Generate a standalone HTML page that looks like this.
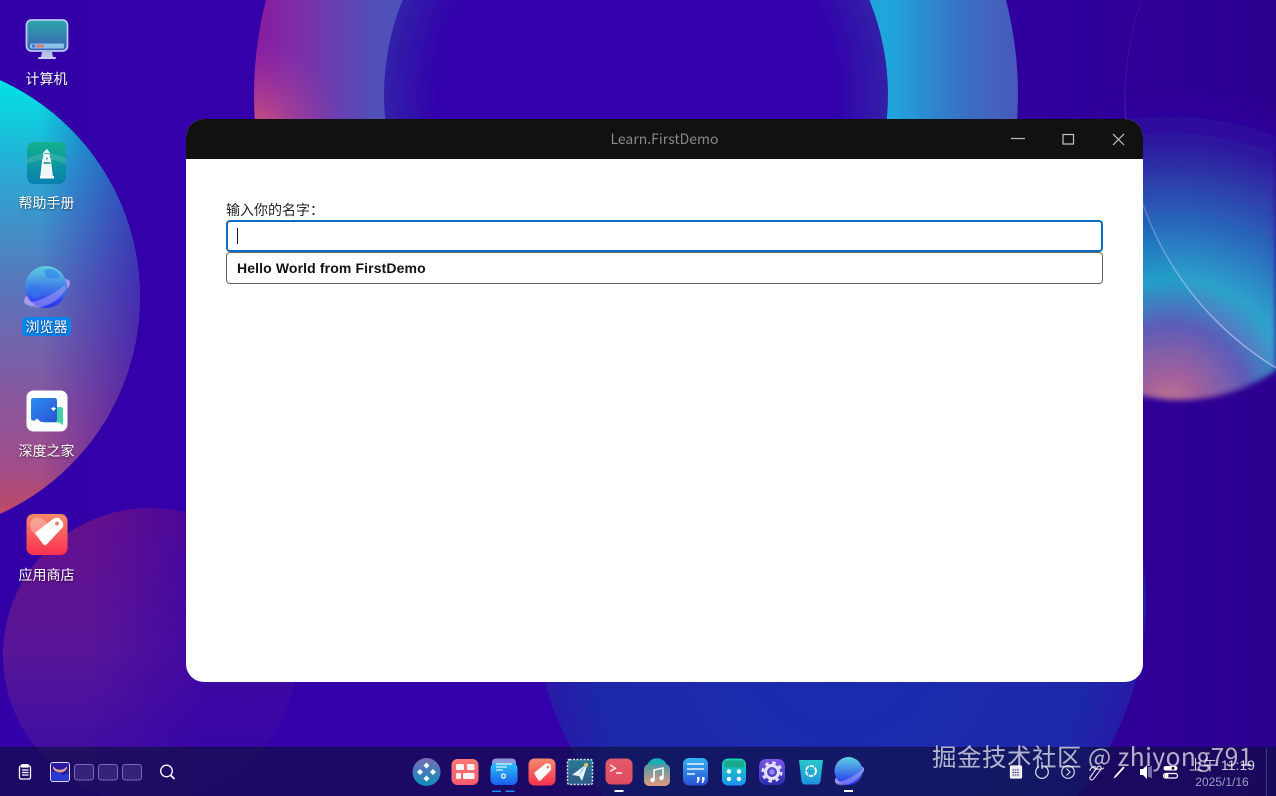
<!DOCTYPE html>
<html lang="zh">
<head>
<meta charset="utf-8">
<title>Learn.FirstDemo</title>
<style>
html,body{margin:0;padding:0;width:1276px;height:796px;overflow:hidden;background:#3000a6;font-family:"Liberation Sans","Noto Sans CJK SC",sans-serif}
svg.abs{position:absolute;left:0;top:0;display:block}
.lbl{position:absolute;left:0;width:93px;text-align:center;color:#fff;font-size:14px;line-height:20px;text-shadow:0 1px 2px rgba(0,0,0,.55)}
.win{position:absolute;left:186px;top:119px;width:957px;height:563px;background:#fff;border-radius:18px;overflow:hidden}
.bar{position:absolute;left:0;top:0;width:100%;height:40px;background:#111}
.title{position:absolute;left:0;top:0;width:957px;text-align:center;line-height:41px;font-size:14px;color:#8a8a8a;font-family:"Noto Sans CJK SC","Liberation Sans",sans-serif}
.name{position:absolute;left:40px;top:81px;font-size:14px;line-height:20px;color:#222;font-family:"Liberation Sans","Noto Sans CJK SC",sans-serif}
.inp{position:absolute;left:40px;top:101px;width:873px;height:28px;border:2px solid #0f6cbd;border-radius:4px;background:#fff}
.caret{position:absolute;left:9px;top:6px;width:1px;height:16px;background:#111}
.btn{position:absolute;left:40px;top:133px;width:875px;height:30px;border:1px solid #666;border-radius:4px;line-height:30px;font-size:14px;font-weight:bold;color:#111;text-indent:10px;letter-spacing:.12px;box-sizing:content-box}
.wm{position:absolute;left:932px;top:739px;font-size:24.5px;line-height:36px;letter-spacing:.5px;color:rgba(255,255,255,.68);white-space:nowrap;font-family:"Noto Sans CJK SC","Liberation Sans",sans-serif}
.time{position:absolute;left:1188px;top:756px;width:68px;text-align:center;font-size:14px;line-height:18px;color:rgba(255,255,255,.8);white-space:nowrap}
.date{position:absolute;left:1186px;top:774px;width:72px;text-align:center;font-size:12px;line-height:16px;color:#9c9fc6}
</style>
</head>
<body>
<svg class="abs" width="1276" height="796" viewBox="0 0 1276 796">
<defs>
<linearGradient id="bg" x1="0" x2="1" y1="0" y2="0"><stop offset="0" stop-color="#3300a8"/><stop offset=".6" stop-color="#3300ad"/><stop offset="1" stop-color="#2c0090"/></linearGradient>
<linearGradient id="lc" x1="0" y1="80" x2="0" y2="515" gradientUnits="userSpaceOnUse"><stop offset="0" stop-color="#00e2e4"/><stop offset=".22" stop-color="#2ba8d4"/><stop offset=".48" stop-color="#5a74bb"/><stop offset=".72" stop-color="#86589f"/><stop offset=".9" stop-color="#a44c88"/><stop offset="1" stop-color="#c04a62"/></linearGradient>
<linearGradient id="lcd" x1="40" y1="0" x2="140" y2="0" gradientUnits="userSpaceOnUse"><stop offset="0" stop-color="#3300a8" stop-opacity="0"/><stop offset="1" stop-color="#3300a8" stop-opacity=".6"/></linearGradient>
<linearGradient id="top" x1="255" x2="1018" y1="0" y2="0" gradientUnits="userSpaceOnUse"><stop offset="0" stop-color="#8a1aa0"/><stop offset=".06" stop-color="#7c30a8"/><stop offset=".16" stop-color="#5050b8"/><stop offset=".5" stop-color="#3f62bb"/><stop offset=".83" stop-color="#1fa6dc"/><stop offset=".93" stop-color="#3a70c4"/><stop offset="1" stop-color="#4858ba"/></linearGradient>
<radialGradient id="topp" cx="250" cy="135" r="95" gradientUnits="userSpaceOnUse"><stop offset="0" stop-color="#dc6070" stop-opacity=".95"/><stop offset=".5" stop-color="#c0508a" stop-opacity=".45"/><stop offset="1" stop-color="#a040a0" stop-opacity="0"/></radialGradient>
<radialGradient id="inner" cx="636" cy="95" r="252" gradientUnits="userSpaceOnUse"><stop offset="0" stop-color="#3200ac"/><stop offset=".78" stop-color="#3200ac"/><stop offset="1" stop-color="#3220a8"/></radialGradient>
<linearGradient id="blc" x1="150" y1="509" x2="150" y2="790" gradientUnits="userSpaceOnUse"><stop offset="0" stop-color="#66108c"/><stop offset=".5" stop-color="#581598"/><stop offset=".85" stop-color="#400ea2"/><stop offset="1" stop-color="#3a0ca4"/></linearGradient>
<linearGradient id="blf" x1="60" y1="0" x2="200" y2="0" gradientUnits="userSpaceOnUse"><stop offset=".2" stop-color="#3300a8" stop-opacity="0"/><stop offset="1" stop-color="#3300a8" stop-opacity=".6"/></linearGradient>
<radialGradient id="brc" cx="840" cy="640" r="306" gradientUnits="userSpaceOnUse"><stop offset="0" stop-color="#1b2cb0"/><stop offset=".8" stop-color="#1c28a8"/><stop offset="1" stop-color="#2a18a8"/></radialGradient>
<radialGradient id="glow" cx="1170" cy="405" r="320" gradientUnits="userSpaceOnUse"><stop offset="0" stop-color="#c07a90"/><stop offset=".09" stop-color="#a4609c"/><stop offset=".25" stop-color="#5d5cb8"/><stop offset=".39" stop-color="#22a0c8"/><stop offset=".56" stop-color="#2266ba"/><stop offset=".74" stop-color="#2c30a4"/><stop offset=".88" stop-color="#2e0ca0" stop-opacity=".8"/><stop offset="1" stop-color="#2c0096" stop-opacity="0"/></radialGradient>
<clipPath id="clipG"><circle cx="1180" cy="230" r="170"/></clipPath>
<filter id="b2" x="-10%" y="-10%" width="120%" height="120%"><feGaussianBlur stdDeviation="3"/></filter>
<linearGradient id="ringS" x1="0" y1="80" x2="0" y2="320" gradientUnits="userSpaceOnUse"><stop offset="0" stop-color="#bec3f5" stop-opacity=".06"/><stop offset=".5" stop-color="#bec3f5" stop-opacity=".3"/><stop offset="1" stop-color="#c8ccf8" stop-opacity=".6"/></linearGradient>
<linearGradient id="ringF" x1="0" y1="140" x2="0" y2="360" gradientUnits="userSpaceOnUse"><stop offset="0" stop-color="#bec8ff" stop-opacity="0"/><stop offset="1" stop-color="#bec8ff" stop-opacity=".1"/></linearGradient>
<linearGradient id="mon" x1="0" y1="0" x2="0" y2="1"><stop offset="0" stop-color="#2aa6a8"/><stop offset="1" stop-color="#3e60b8"/></linearGradient>
<linearGradient id="lh" x1="0" y1="0" x2="0" y2="1"><stop offset="0" stop-color="#12b28e"/><stop offset="1" stop-color="#087fb0"/></linearGradient>
<linearGradient id="globe" x1="0" y1="0" x2="0" y2="1"><stop offset="0" stop-color="#5ed0e0"/><stop offset=".55" stop-color="#3f78e8"/><stop offset="1" stop-color="#2a2cf0"/></linearGradient>
<linearGradient id="tag" x1="0" y1="0" x2="0" y2="1"><stop offset="0" stop-color="#f58a6a"/><stop offset="1" stop-color="#fa3050"/></linearGradient>
<linearGradient id="chat1" x1="0" y1="0" x2="1" y2="1"><stop offset="0" stop-color="#2a90ee"/><stop offset="1" stop-color="#2a50d8"/></linearGradient>
<linearGradient id="files" x1="0" y1="0" x2="0" y2="1"><stop offset="0" stop-color="#2ac0f8"/><stop offset="1" stop-color="#1a60f0"/></linearGradient>
<linearGradient id="term" x1="0" y1="0" x2="0" y2="1"><stop offset="0" stop-color="#e45a68"/><stop offset="1" stop-color="#e04a60"/></linearGradient>
<linearGradient id="mus" x1="0" y1="0" x2="0" y2="1"><stop offset="0" stop-color="#4a98a8"/><stop offset="1" stop-color="#e09a80"/></linearGradient>
<linearGradient id="note" x1="0" y1="0" x2="0" y2="1"><stop offset="0" stop-color="#32b4f0"/><stop offset="1" stop-color="#2a50d8"/></linearGradient>
<linearGradient id="calc" x1="0" y1="0" x2="0" y2="1"><stop offset="0" stop-color="#18d8b0"/><stop offset="1" stop-color="#1a90f0"/></linearGradient>
<linearGradient id="gear" x1="0" y1="0" x2="0" y2="1"><stop offset="0" stop-color="#7a58e8"/><stop offset="1" stop-color="#2a2cb0"/></linearGradient>
<linearGradient id="bin" x1="0" y1="0" x2="0" y2="1"><stop offset="0" stop-color="#28c8c8"/><stop offset="1" stop-color="#2090e0"/></linearGradient>
<linearGradient id="deep" x1="0" y1="0" x2="0" y2="1"><stop offset="0" stop-color="#7a6ab8"/><stop offset="1" stop-color="#0a90b8"/></linearGradient>
<linearGradient id="grid" x1="0" y1="0" x2="0" y2="1"><stop offset="0" stop-color="#fb7a72"/><stop offset="1" stop-color="#f85a70"/></linearGradient>
<linearGradient id="mail" x1="0" y1="0" x2="0" y2="1"><stop offset="0" stop-color="#2a7a90"/><stop offset="1" stop-color="#305a88"/></linearGradient>
</defs>

<!-- wallpaper -->
<rect width="1276" height="796" fill="url(#bg)"/>
<circle cx="636" cy="95" r="382" fill="url(#top)"/>
<circle cx="636" cy="95" r="382" fill="url(#topp)"/>
<circle cx="636" cy="95" r="252" fill="url(#inner)"/>
<circle cx="-98" cy="297" r="238" fill="url(#lc)"/>
<circle cx="-98" cy="297" r="238" fill="url(#lcd)"/>
<path d="M108.400 796A147 147 0 1 1 191.600 796Z" fill="url(#blc)"/>
<path d="M108.400 796A147 147 0 1 1 191.600 796Z" fill="url(#blf)"/>
<path d="M603.400 796A306 306 0 1 1 1076.600 796Z" fill="url(#brc)"/>
<g filter="url(#b2)"><g clip-path="url(#clipG)"><rect x="1000" y="40" width="276" height="380" fill="url(#glow)"/></g></g>
<circle cx="1438" cy="100" r="313" fill="url(#ringF)"/>
<circle cx="1438" cy="100" r="313" fill="none" stroke="url(#ringS)" stroke-width="1.500"/>

<!-- taskbar -->
<rect x="0" y="747" width="1276" height="49" fill="#0e0f3c" fill-opacity=".62"/>
<rect x="0" y="747" width="1276" height="1" fill="#0e0f3c" fill-opacity=".5"/>
<rect x="1266" y="748" width="1" height="48" fill="rgba(255,255,255,.18)"/>

<!-- desktop: computer -->
<g>
<rect x="26.500" y="20" width="41" height="31" rx="5" fill="url(#mon)" stroke="#b8c8f8" stroke-width="1.800"/>
<rect x="30" y="43.500" width="34" height="5" rx="1.500" fill="#8cc0e8"/>
<rect x="32" y="44.500" width="3" height="3" fill="#4a70e0"/><rect x="36" y="44.500" width="8" height="3" fill="#d88078"/>
<path d="M42 52h10l1 5h-12z" fill="#b8c0e8"/><rect x="38" y="57" width="18" height="2" rx="1" fill="#c8d0f0"/>
</g>
<!-- help -->
<g>
<rect x="27" y="142" width="39" height="42" rx="7" fill="url(#lh)"/>
<path d="M27 158l20-6 19 6v6l-19-6-20 6z" fill="rgba(255,255,255,.13)"/>
<path d="M46.800 149l3 3.500v4.500l1 2 2 17h-12.500l2-17 1-2v-4.500z" fill="#f2f8f8"/>
<rect x="44" y="153" width="6" height="1" fill="#58a8a8"/><rect x="43.500" y="162" width="7" height="2" fill="#4aa0b0"/><circle cx="47" cy="158.500" r="1" fill="#4aa0b0"/>
<rect x="40" y="176" width="14" height="2.500" fill="#fff"/>
</g>
<!-- browser -->
<g>
<ellipse cx="47" cy="292" rx="25" ry="9" transform="rotate(-25 47 292)" fill="#a79af0"/>
<circle cx="46" cy="287" r="21" fill="url(#globe)"/>
<path d="M44 270c8-3 14 1 16 6-3 4-10 3-14 1zM30 285c6-3 12 1 14 6-2 6-8 8-12 6-3-4-4-8-2-12z" fill="rgba(50,120,235,.55)"/>
<path d="M25 301c8 3 22-2 40-16 1 2 1 4 0 6-6 8-14 14-24 16-7 1-15 0-16-6z" fill="rgba(170,160,245,.55)"/>
<rect x="22" y="317" width="49" height="19" rx="4" fill="#0a84f0"/>
</g>
<!-- deepin home -->
<g>
<rect x="26.500" y="390.500" width="41" height="41" rx="7" fill="#fbfdff"/>
<path d="M48 407h12c2 0 3 1 3 3v15l-4-2.500H44z" fill="#3fd0a8"/>
<path d="M31 400.500c0-1.500 1-2.500 2.500-2.500h21c1.500 0 2.500 1 2.500 2.500v19c0 1.500-1 2.500-2.500 2.500H41l-4-3.500-3 2.500-3-1.500z" fill="url(#chat1)"/>
<path d="M51 408.500l2.500-1.500 2.500 1.500-2.500 2.500z" fill="#fff"/>
</g>
<!-- store -->
<g>
<rect x="26.500" y="514" width="41" height="41" rx="7" fill="url(#tag)"/>
<path d="M46 547L32 531C27 523 33 516 40 518C43 519 45 521 47 523z" fill="rgba(255,255,255,.3)"/>
<path d="M35 533L53 519Q56 517 59 518L62 521Q64 524 63 527L47 544Q45 546 43 544z" fill="#fff"/>
<circle cx="57" cy="523.500" r="2" fill="#f08070"/>
</g>

<!-- taskbar left -->
<g fill="none" stroke="#fff" stroke-width="1.300">
<rect x="19.500" y="766" width="11" height="13" rx="1.500"/><path d="M22 764.800h6v2.200h-6zM22 770h6.500M22 772.500h6.500M22 775h6.500"/>
<circle cx="166.500" cy="771" r="5.800"/><path d="M171 775.500l3.500 3.500" stroke-width="1.600"/>
</g>
<g>
<rect x="50.500" y="762.500" width="19" height="19" rx="2.500" fill="#2a1aa0" stroke="#dfe0ff"/>
<path d="M53 766c3 5 11 5 14 0v2c-2 6-12 6-14 0z" fill="#e2a090"/>
<path d="M51.500 772l4-1 8 4 5-2v7.500h-17z" fill="#2838d0"/>
<g fill="rgba(190,170,255,.14)" stroke="rgba(175,155,240,.6)">
<rect x="74.500" y="764.500" width="19" height="15.500" rx="2.500"/>
<rect x="98.500" y="764.500" width="19" height="15.500" rx="2.500"/>
<rect x="122.500" y="764.500" width="19" height="15.500" rx="2.500"/>
</g>
</g>

<!-- dock -->
<g>
<circle cx="426.500" cy="772" r="14" fill="url(#deep)"/>
<g fill="#fff"><path d="M426.500 762.500l3 3-3 3-3-3z"/><path d="M426.500 775.500l3 3-3 3-3-3z"/><path d="M420 769l3 3-3 3-3-3z"/><path d="M433 769l3 3-3 3-3-3z"/></g>

<rect x="451.500" y="759" width="27" height="26" rx="6" fill="url(#grid)"/>
<g fill="#fff" opacity=".92"><rect x="456" y="764" width="8" height="6" rx="1"/><rect x="467" y="764" width="7.500" height="6" rx="1"/><rect x="456" y="773" width="5" height="6" rx="1"/><rect x="463" y="773" width="11.500" height="6" rx="1"/></g>

<rect x="492" y="758.500" width="24" height="12" rx="4" fill="#8a9ad8"/>
<rect x="490.500" y="763" width="27" height="22" rx="5" fill="url(#files)"/>
<path d="M496 764h16M496 767h11M496 770h7" stroke="#e4f2ff" stroke-width="1.300"/>
<circle cx="503.500" cy="776" r="2" fill="none" stroke="#fff" stroke-width="1.300"/>
<rect x="492" y="790.500" width="9" height="1.500" fill="#1890f8"/><rect x="505.500" y="790.500" width="9" height="1.500" fill="#1890f8"/>

<rect x="528.500" y="758.500" width="27" height="27" rx="6" fill="url(#tag)"/>
<path d="M534 773l11-9c2-1 6-1 6 3v3l-10 10c-1 1-2 1-3 0z" fill="#fff"/><circle cx="548" cy="767" r="1.400" fill="#f08070"/>

<rect x="567.500" y="759.500" width="25" height="25" rx="2" fill="url(#mail)" stroke="#d0e0f8" stroke-width="1.500" stroke-dasharray="2 1.500"/>
<path d="M572 775l16-12-6 18-3-5z" fill="#e8f4ff"/><path d="M579 776l9-13-7 7z" fill="#9ac8e8"/><circle cx="586" cy="765" r="2" fill="#e8c060"/>

<rect x="605.500" y="758.500" width="27" height="26" rx="6" fill="url(#term)"/>
<path d="M610 765l5.500 3.200-5.500 3.200" fill="none" stroke="#fff" stroke-width="1.300"/><path d="M616 773h6" stroke="#fff" stroke-width="1.300"/>
<rect x="614.500" y="790" width="9" height="2" fill="#f4f4ff"/>

<path d="M647 768c0-13 20-13 20 0z" fill="#14b0b4"/>
<rect x="644" y="764" width="26" height="22" rx="5" fill="url(#mus)"/>
<path d="M654 780v-10l9-2v10" fill="none" stroke="#fff" stroke-width="1.500"/><circle cx="652.500" cy="780" r="2.200" fill="#fff"/><circle cx="661.500" cy="778" r="2.200" fill="#fff"/>

<rect x="683" y="758" width="25" height="27.500" rx="6" fill="url(#note)"/>
<path d="M687 764h17M687 769h17M687 774h8" stroke="#e8f4ff" stroke-width="1.400"/>
<path d="M697 777h2.500v3l-1.500 3h-1.500l1-3h-.5zM702 777h2.500v3l-1.500 3h-1.500l1-3h-.5z" fill="#fff"/>

<rect x="722" y="758.500" width="24" height="27" rx="6" fill="url(#calc)"/>
<rect x="724" y="760.500" width="20" height="7" rx="2" fill="#18a890"/>
<g fill="#fff"><circle cx="729" cy="771.500" r="2.200"/><circle cx="739" cy="771.500" r="2.200"/><circle cx="729" cy="779" r="2.200"/><circle cx="739" cy="779" r="2.200"/></g>

<rect x="759" y="759" width="26" height="26" rx="7" fill="url(#gear)"/>
<circle cx="772" cy="772" r="6.500" fill="none" stroke="#e4e2fb" stroke-width="3"/>
<circle cx="772" cy="772" r="9.300" fill="none" stroke="#e4e2fb" stroke-width="2.600" stroke-dasharray="3.500 3.800"/>
<circle cx="772" cy="772" r="2.800" fill="#9088e0"/>

<path d="M799 760h24l-2.500 21c-.3 2-1.500 3.500-3.500 3.500h-12c-2 0-3.200-1.500-3.500-3.500z" fill="url(#bin)"/>
<circle cx="811" cy="771" r="5" fill="none" stroke="#fff" stroke-width="1.800" stroke-dasharray="4.500 1"/>

<ellipse cx="849.500" cy="775" rx="16" ry="6" transform="rotate(-25 849.500 775)" fill="#9a8cf0"/>
<circle cx="848.500" cy="771" r="14" fill="url(#globe)"/>
<path d="M835 781c6 2 15-2 27-11 1 2 0 4-1 5-5 6-10 9-16 10-5 1-10 0-10-4z" fill="rgba(170,160,245,.55)"/>
<rect x="844" y="790" width="9" height="2" fill="#f4f4ff"/>
</g>

<!-- tray -->
<g fill="none" stroke="#fff" stroke-width="1.200">
<rect x="1010.500" y="766" width="11" height="12" rx="1" fill="#fff" fill-opacity=".9"/>
<path d="M1012.500 770h7M1012.500 772.500h7M1012.500 775h7" stroke="#20206a" stroke-width="1" stroke-dasharray="1.500 .8"/>
<path d="M1039 766.500a6.300 6.300 0 1 0 6 0M1042 762v7" opacity=".85"/>
<circle cx="1068" cy="772" r="6.300" opacity=".8"/><path d="M1066.500 768.500l3.500 3.500-3.500 3.500" opacity=".8"/>
<path d="M1089.500 778l8-11c2-2 5 0 3 3l-7 9c-2 2-5 0-3-2l6-9" opacity=".8"/><path d="M1090 771c0-3 3-5 6-4" opacity=".8"/>
<path d="M1115 777l9-10" stroke-width="1.800"/><path d="M1114 778l1.500-2" stroke-width="1"/>
</g>
<path d="M1140 769h3l4-4v14l-4-4h-3z" fill="#fff"/><path d="M1149 767v10M1151 766v12" stroke="#cfd0f0" stroke-width="1"/>
<rect x="1163.500" y="766" width="14" height="4.500" rx="2.200" fill="#fff"/><rect x="1163.500" y="773.500" width="14" height="4.500" rx="2.200" fill="none" stroke="#fff" stroke-width="1.200"/><circle cx="1173" cy="768.200" r="1.500" fill="#222"/><circle cx="1166.500" cy="775.700" r="2" fill="#fff"/>
</svg>

<div class="lbl" style="top:69px">计算机</div>
<div class="lbl" style="top:193px">帮助手册</div>
<div class="lbl" style="top:317px">浏览器</div>
<div class="lbl" style="top:441px">深度之家</div>
<div class="lbl" style="top:565px">应用商店</div>

<div class="win">
  <div class="bar">
    <div class="title">Learn.FirstDemo</div>
    <svg style="position:absolute;left:0;top:0" width="957" height="40">
      <path d="M825 19.500h14" stroke="#b8b8b8" stroke-width="1.200"/>
      <rect x="877" y="15.500" width="10.500" height="9.500" fill="none" stroke="#c4c4c4" stroke-width="1.200"/>
      <path d="M927 15l11 11M938 15l-11 11" stroke="#c4c4c4" stroke-width="1.200"/>
    </svg>
  </div>
  <div class="name">输入你的名字：</div>
  <div class="inp"><div class="caret"></div></div>
  <div class="btn">Hello World from FirstDemo</div>
</div>

<div class="time">上午 11:19</div>
<div class="date">2025/1/16</div>
<div class="wm">掘金技术社区 @ zhiyong791</div>
</body>
</html>
